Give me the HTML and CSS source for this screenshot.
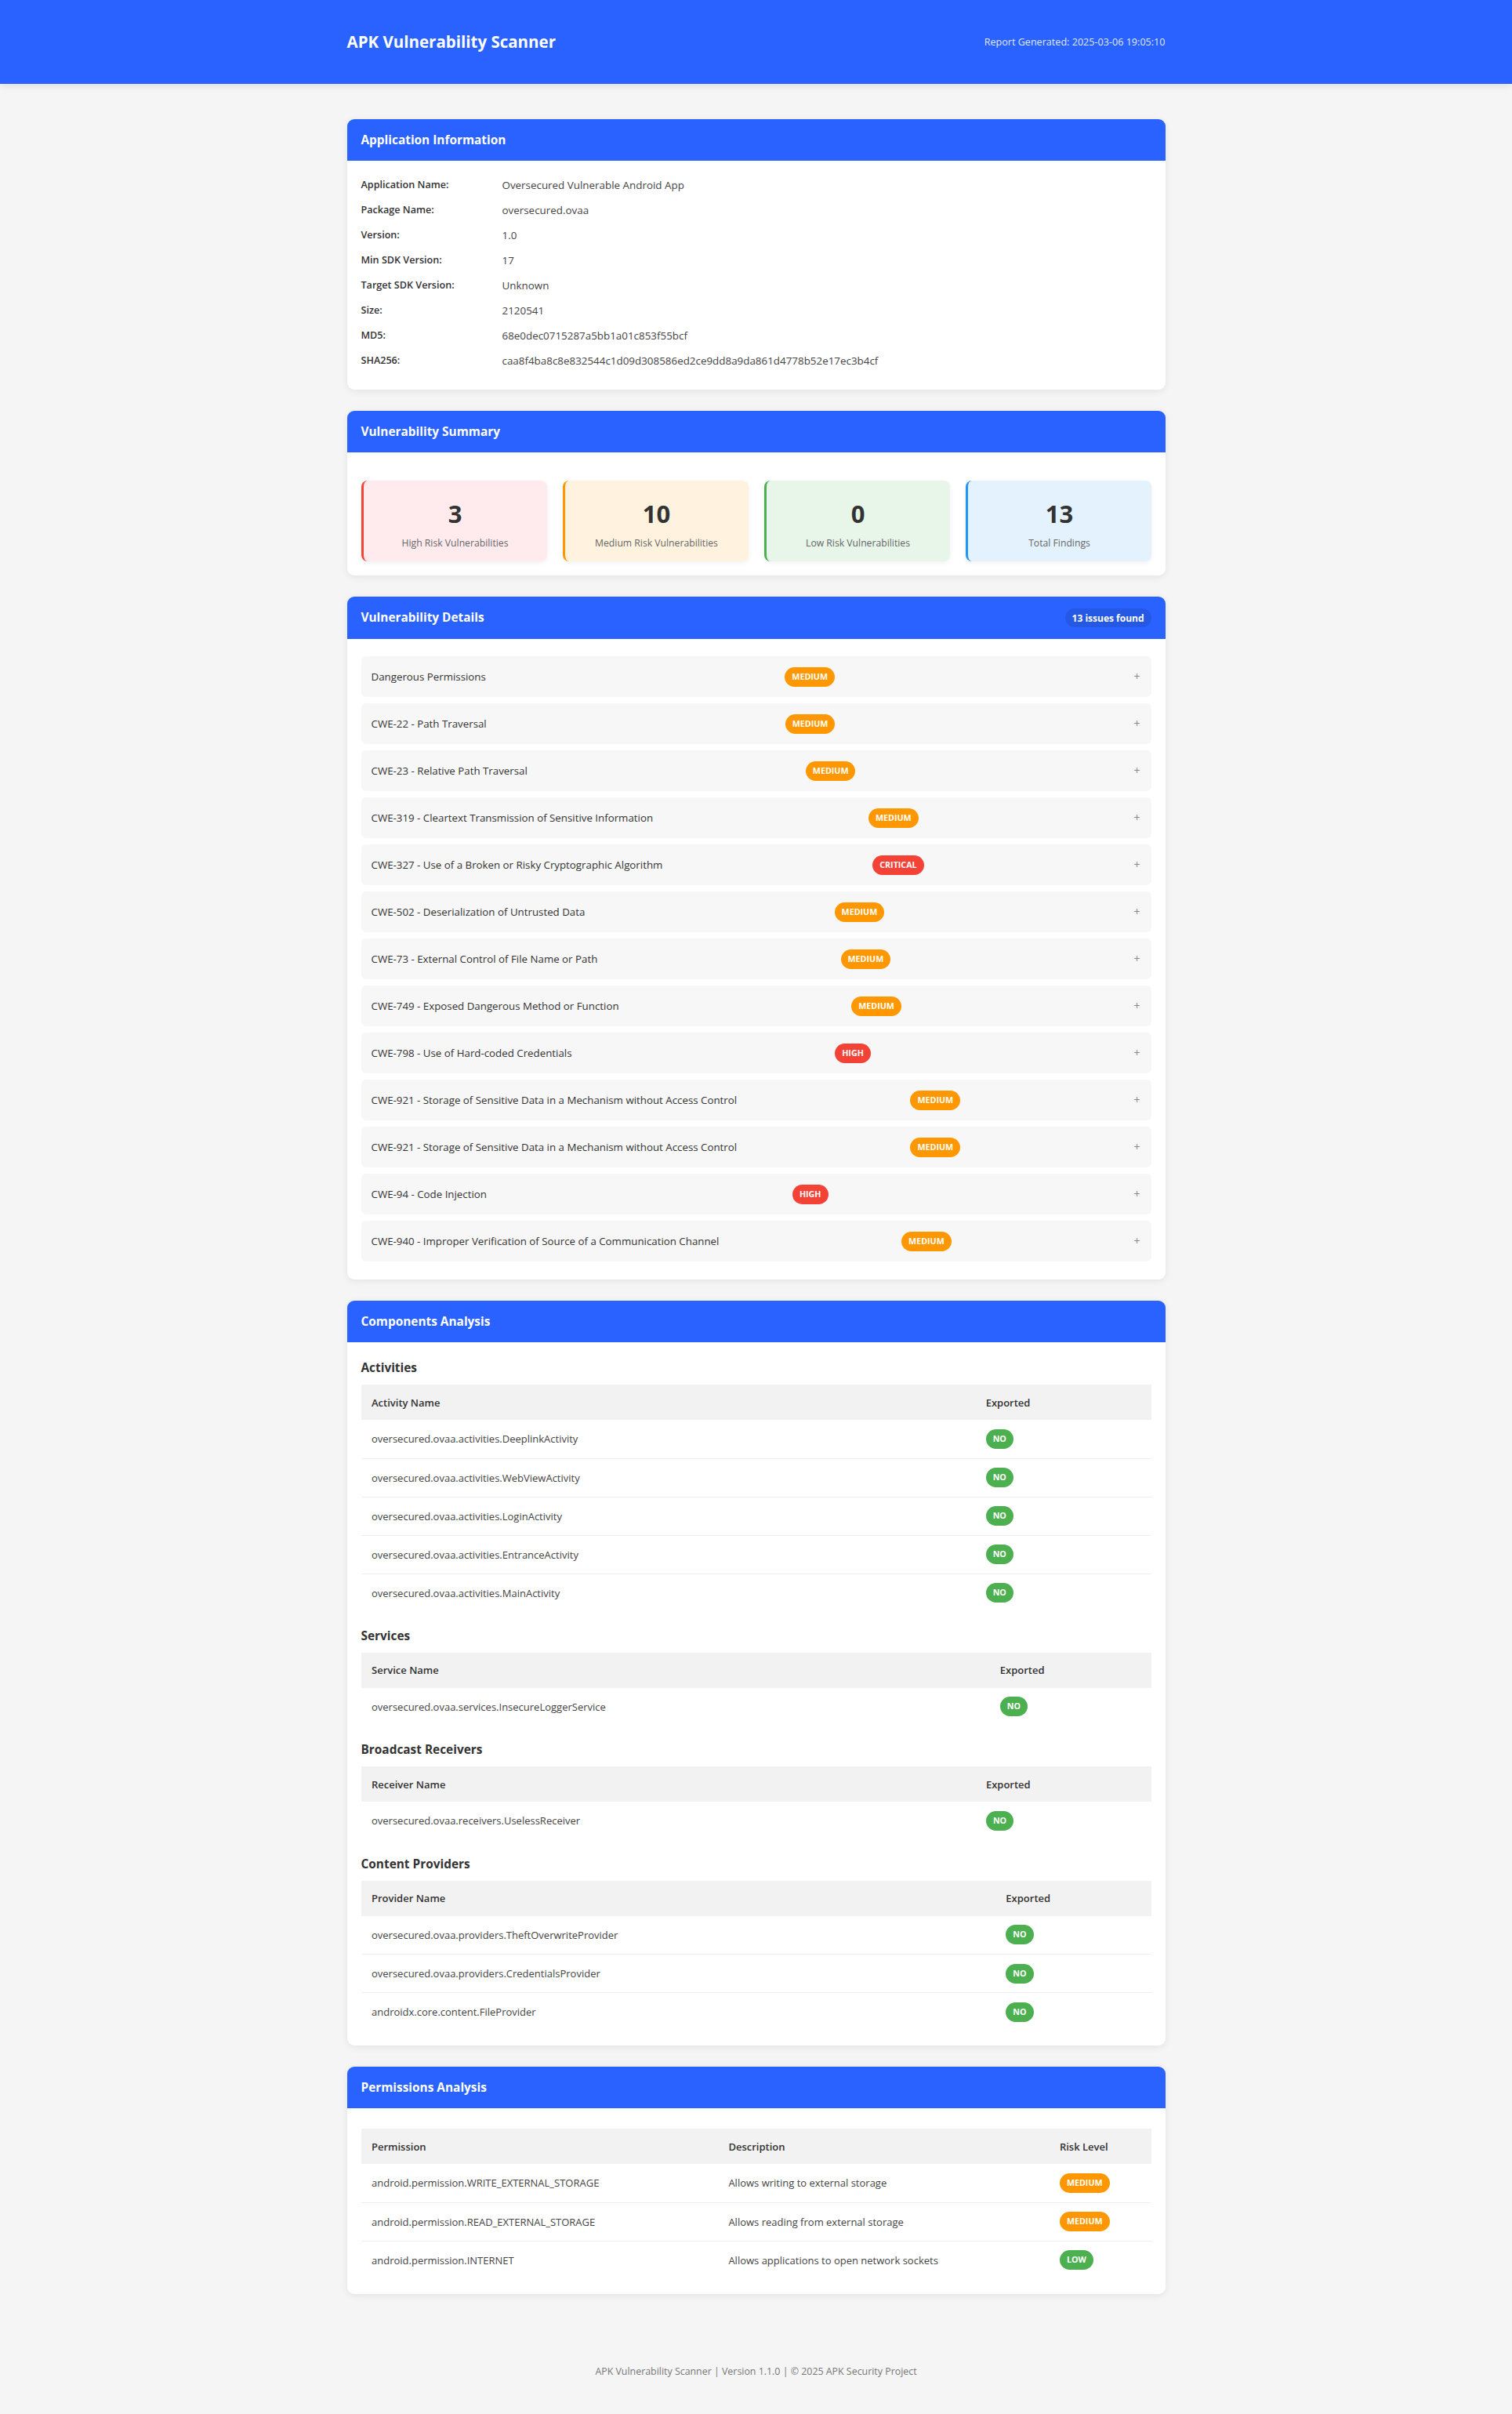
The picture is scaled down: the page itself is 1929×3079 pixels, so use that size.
FILE: index.html
```html
<!DOCTYPE html>
<html lang="en">
<head>
<meta charset="utf-8">
<title>APK Vulnerability Scanner Report</title>
<link rel="stylesheet" href="styles.css">
</head>
<body>
<header class="topbar">
  <div class="container topbar-inner">
    <h1 class="brand">APK Vulnerability Scanner</h1>
    <div class="generated">Report Generated: 2025-03-06 19:05:10</div>
  </div>
</header>

<main class="container main">
  <section class="card">
    <div class="card-header"><h2>Application Information</h2></div>
    <div class="card-body info-body">
      <div class="info-grid">
        <div class="info-label">Application Name:</div><div class="info-value">Oversecured Vulnerable Android App</div>
        <div class="info-label">Package Name:</div><div class="info-value">oversecured.ovaa</div>
        <div class="info-label">Version:</div><div class="info-value">1.0</div>
        <div class="info-label">Min SDK Version:</div><div class="info-value">17</div>
        <div class="info-label">Target SDK Version:</div><div class="info-value">Unknown</div>
        <div class="info-label">Size:</div><div class="info-value">2120541</div>
        <div class="info-label">MD5:</div><div class="info-value">68e0dec0715287a5bb1a01c853f55bcf</div>
        <div class="info-label">SHA256:</div><div class="info-value">caa8f4ba8c8e832544c1d09d308586ed2ce9dd8a9da861d4778b52e17ec3b4cf</div>
      </div>
    </div>
  </section>

  <section class="card">
    <div class="card-header"><h2>Vulnerability Summary</h2></div>
    <div class="card-body">
      <div class="summary-grid">
        <div class="stat stat-high"><div class="stat-num">3</div><div class="stat-label">High Risk Vulnerabilities</div></div>
        <div class="stat stat-medium"><div class="stat-num">10</div><div class="stat-label">Medium Risk Vulnerabilities</div></div>
        <div class="stat stat-low"><div class="stat-num">0</div><div class="stat-label">Low Risk Vulnerabilities</div></div>
        <div class="stat stat-total"><div class="stat-num">13</div><div class="stat-label">Total Findings</div></div>
      </div>
    </div>
  </section>

  <section class="card">
    <div class="card-header header-split"><h2>Vulnerability Details</h2><span class="count-pill">13 issues found</span></div>
    <div class="card-body vuln-body">
      <div class="vuln-item"><span class="vuln-title">Dangerous Permissions</span><span class="badge badge-medium">MEDIUM</span><span class="toggle">+</span></div>
      <div class="vuln-item"><span class="vuln-title">CWE-22 - Path Traversal</span><span class="badge badge-medium">MEDIUM</span><span class="toggle">+</span></div>
      <div class="vuln-item"><span class="vuln-title">CWE-23 - Relative Path Traversal</span><span class="badge badge-medium">MEDIUM</span><span class="toggle">+</span></div>
      <div class="vuln-item"><span class="vuln-title">CWE-319 - Cleartext Transmission of Sensitive Information</span><span class="badge badge-medium">MEDIUM</span><span class="toggle">+</span></div>
      <div class="vuln-item"><span class="vuln-title">CWE-327 - Use of a Broken or Risky Cryptographic Algorithm</span><span class="badge badge-high">CRITICAL</span><span class="toggle">+</span></div>
      <div class="vuln-item"><span class="vuln-title">CWE-502 - Deserialization of Untrusted Data</span><span class="badge badge-medium">MEDIUM</span><span class="toggle">+</span></div>
      <div class="vuln-item"><span class="vuln-title">CWE-73 - External Control of File Name or Path</span><span class="badge badge-medium">MEDIUM</span><span class="toggle">+</span></div>
      <div class="vuln-item"><span class="vuln-title">CWE-749 - Exposed Dangerous Method or Function</span><span class="badge badge-medium">MEDIUM</span><span class="toggle">+</span></div>
      <div class="vuln-item"><span class="vuln-title">CWE-798 - Use of Hard-coded Credentials</span><span class="badge badge-high">HIGH</span><span class="toggle">+</span></div>
      <div class="vuln-item"><span class="vuln-title">CWE-921 - Storage of Sensitive Data in a Mechanism without Access Control</span><span class="badge badge-medium">MEDIUM</span><span class="toggle">+</span></div>
      <div class="vuln-item"><span class="vuln-title">CWE-921 - Storage of Sensitive Data in a Mechanism without Access Control</span><span class="badge badge-medium">MEDIUM</span><span class="toggle">+</span></div>
      <div class="vuln-item"><span class="vuln-title">CWE-94 - Code Injection</span><span class="badge badge-high">HIGH</span><span class="toggle">+</span></div>
      <div class="vuln-item"><span class="vuln-title">CWE-940 - Improper Verification of Source of a Communication Channel</span><span class="badge badge-medium">MEDIUM</span><span class="toggle">+</span></div>
    </div>
  </section>

  <section class="card">
    <div class="card-header"><h2>Components Analysis</h2></div>
    <div class="card-body">
      <h3 class="sub-title">Activities</h3>
      <table class="data-table">
        <thead><tr><th>Activity Name</th><th>Exported</th></tr></thead>
        <tbody>
          <tr><td>oversecured.ovaa.activities.DeeplinkActivity</td><td><span class="badge badge-low">NO</span></td></tr>
          <tr><td>oversecured.ovaa.activities.WebViewActivity</td><td><span class="badge badge-low">NO</span></td></tr>
          <tr><td>oversecured.ovaa.activities.LoginActivity</td><td><span class="badge badge-low">NO</span></td></tr>
          <tr><td>oversecured.ovaa.activities.EntranceActivity</td><td><span class="badge badge-low">NO</span></td></tr>
          <tr><td>oversecured.ovaa.activities.MainActivity</td><td><span class="badge badge-low">NO</span></td></tr>
        </tbody>
      </table>

      <h3 class="sub-title">Services</h3>
      <table class="data-table">
        <thead><tr><th>Service Name</th><th>Exported</th></tr></thead>
        <tbody>
          <tr><td>oversecured.ovaa.services.InsecureLoggerService</td><td><span class="badge badge-low">NO</span></td></tr>
        </tbody>
      </table>

      <h3 class="sub-title">Broadcast Receivers</h3>
      <table class="data-table">
        <thead><tr><th>Receiver Name</th><th>Exported</th></tr></thead>
        <tbody>
          <tr><td>oversecured.ovaa.receivers.UselessReceiver</td><td><span class="badge badge-low">NO</span></td></tr>
        </tbody>
      </table>

      <h3 class="sub-title">Content Providers</h3>
      <table class="data-table">
        <thead><tr><th>Provider Name</th><th>Exported</th></tr></thead>
        <tbody>
          <tr><td>oversecured.ovaa.providers.TheftOverwriteProvider</td><td><span class="badge badge-low">NO</span></td></tr>
          <tr><td>oversecured.ovaa.providers.CredentialsProvider</td><td><span class="badge badge-low">NO</span></td></tr>
          <tr><td>androidx.core.content.FileProvider</td><td><span class="badge badge-low">NO</span></td></tr>
        </tbody>
      </table>
    </div>
  </section>

  <section class="card">
    <div class="card-header"><h2>Permissions Analysis</h2></div>
    <div class="card-body">
      <table class="data-table perm-table">
        <thead><tr><th>Permission</th><th>Description</th><th>Risk Level</th></tr></thead>
        <tbody>
          <tr><td>android.permission.WRITE_EXTERNAL_STORAGE</td><td>Allows writing to external storage</td><td><span class="badge badge-medium">MEDIUM</span></td></tr>
          <tr><td>android.permission.READ_EXTERNAL_STORAGE</td><td>Allows reading from external storage</td><td><span class="badge badge-medium">MEDIUM</span></td></tr>
          <tr><td>android.permission.INTERNET</td><td>Allows applications to open network sockets</td><td><span class="badge badge-low">LOW</span></td></tr>
        </tbody>
      </table>
    </div>
  </section>
</main>

<footer class="footer">APK Vulnerability Scanner | Version 1.1.0 | © 2025 APK Security Project</footer>
</body>
</html>
```

FILE: styles.css
```css
* { box-sizing: border-box; }

html, body {
  margin: 0;
  padding: 0;
}

body {
  background: #f5f5f5;
  color: #333;
  font-family: "Open Sans", "Noto Sans", "Liberation Sans", sans-serif;
  font-size: 12.6px;
}

.container {
  width: 1044px;
  margin: 0 auto;
}

/* Top bar */
.topbar {
  background: #2962ff;
  color: #fff;
  padding: 39px 0;
  box-shadow: 0 2px 10px rgba(0, 0, 0, 0.1);
}

.topbar-inner {
  display: flex;
  justify-content: space-between;
  align-items: center;
}

.brand {
  margin: 0;
  font-size: 20.5px;
  line-height: 29px;
  font-weight: 700;
}

.generated {
  font-size: 12.6px;
  line-height: 18px;
  color: rgba(255, 255, 255, 0.88);
}

.main {
  padding-top: 45px;
}

/* Cards */
.card {
  background: #fff;
  border-radius: 9px;
  box-shadow: 0 2px 10px rgba(0, 0, 0, 0.08);
  margin-bottom: 27px;
  overflow: hidden;
}

.card-header {
  background: #2962ff;
  color: #fff;
  padding: 13.5px 18px;
}

.card-header h2 {
  margin: 0;
  font-size: 15.4px;
  line-height: 26px;
  font-weight: 700;
}

.header-split {
  display: flex;
  justify-content: space-between;
  align-items: center;
  padding: 14px 18px;
}

.count-pill {
  background: rgba(0, 0, 0, 0.1);
  color: #fff;
  font-weight: 700;
  font-size: 12px;
  line-height: 15px;
  padding: 4.5px 9px;
  border-radius: 12px;
}

.card-body {
  padding: 18px;
}

/* Application info */
.info-body {
  padding: 15px 18px 21px;
}

.info-grid {
  display: grid;
  grid-template-columns: 180px 1fr;
  line-height: 32px;
}

.info-label {
  font-weight: 600;
  color: #333;
}

.info-value {
  color: #444;
  font-size: 13.4px;
}

/* Summary */
.summary-grid {
  display: grid;
  grid-template-columns: repeat(4, 1fr);
  gap: 20px;
  margin-top: 18px;
}

.stat {
  border-radius: 8px;
  border-left: 3px solid transparent;
  padding: 18px 18px 14px;
  text-align: center;
  box-shadow: 0 2px 6px rgba(0, 0, 0, 0.06);
  height: 103px;
}

.stat-num {
  font-size: 31px;
  line-height: 48px;
  font-weight: 700;
  color: #333;
}

.stat-label {
  margin-top: 5px;
  line-height: 18px;
  color: #666;
  font-size: 12.2px;
}

.stat-high { background: #ffebee; border-left-color: #f44336; }
.stat-medium { background: #fff3e0; border-left-color: #ff9800; }
.stat-low { background: #e8f5e9; border-left-color: #4caf50; }
.stat-total { background: #e3f2fd; border-left-color: #2196f3; }

/* Vulnerability list */
.vuln-body {
  padding: 22px 18px 23px;
  display: flex;
  flex-direction: column;
  gap: 8px;
}

.vuln-item {
  display: flex;
  justify-content: space-between;
  align-items: center;
  height: 52px;
  padding: 0 14px 0 13px;
  background: #f7f7f7;
  border-radius: 6px;
}

.vuln-title {
  color: #333;
  font-size: 13.3px;
}

.toggle {
  color: #888;
  font-size: 14px;
  line-height: 20px;
}

/* Badges */
.badge {
  display: inline-block;
  color: #fff;
  font-weight: 700;
  font-size: 10.7px;
  line-height: 15px;
  padding: 5px 9px;
  border-radius: 13px;
  vertical-align: middle;
}

.badge-medium { background: #ff9800; }
.badge-high { background: #f44336; }
.badge-low { background: #4caf50; }

/* Sub sections */
.sub-title {
  margin: 15px 0 6px;
  font-size: 15.4px;
  line-height: 30px;
  font-weight: 700;
  color: #333;
}

.sub-title:first-child {
  margin-top: 0;
}

/* Tables */
.data-table {
  width: 100%;
  border-collapse: collapse;
  font-size: 13px;
}

.data-table th {
  background: #f2f2f2;
  text-align: left;
  font-weight: 600;
  color: #333;
  padding: 11px 13.5px;
  height: 45px;
  line-height: 22px;
}

.data-table td {
  padding: 11px 13.5px;
  height: 49px;
  line-height: 20px;
  color: #444;
  border-bottom: 1px solid #eee;
}

.data-table tbody tr:last-child td {
  border-bottom-color: transparent;
}

.perm-table {
  margin-top: 8px;
}

/* Footer */
.footer {
  text-align: center;
  color: #777;
  font-size: 12.4px;
  line-height: 18px;
  padding: 63px 0 44px;
}
```
